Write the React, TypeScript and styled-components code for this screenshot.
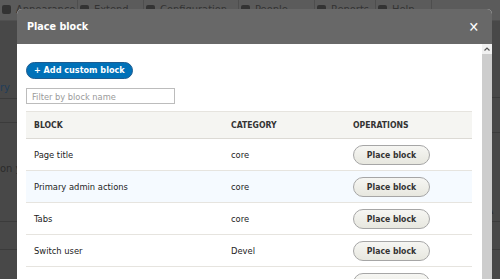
import React from "react";
import styled, { createGlobalStyle } from "styled-components";

const Global = createGlobalStyle`
  html, body { margin: 0; padding: 0; }
  body {
    width: 500px; height: 279px; overflow: hidden;
    background: #484848;
    font-family: "DejaVu Sans Condensed", "DejaVu Sans", sans-serif;
    font-stretch: condensed;
  }
  #root { position: relative; width: 500px; height: 279px; overflow: hidden; }
`;

/* ---------- background page (dimmed) ---------- */
const Page = styled.div`
  display: flex;
  flex-direction: column;
  width: 500px;
  height: 279px;
`;

const Toolbar = styled.div`
  display: flex;
  height: 20px;
  background: #5b5b5b;
  border-bottom: 1px solid #505050;
`;

const ToolItem = styled.div<{ $w: number }>`
  display: flex;
  align-items: flex-start;
  gap: 5px;
  width: ${(p) => p.$w}px;
  padding: 3px 0 0 2px;
  box-sizing: border-box;
  border-right: 1px solid #4e4e4e;
  color: #333;
  font-size: 11px;
  line-height: 14px;
  white-space: nowrap;
  overflow: hidden;
`;

const IconDot = styled.span`
  display: inline-block;
  flex-shrink: 0;
  width: 9px;
  height: 9px;
  margin-top: 2px;
  border-radius: 2px;
  background: #333;
`;

const BgBody = styled.div`
  display: flex;
  justify-content: space-between;
  flex: 1;
`;

const BgCol = styled.div`
  display: flex;
  flex-direction: column;
  width: 20px;
`;

const BgRow = styled.div<{ $h: number; $line?: boolean; $link?: boolean }>`
  height: ${(p) => p.$h}px;
  box-sizing: border-box;
  border-bottom: ${(p) => (p.$line ? "1px solid #3b3b3b" : "none")};
  color: ${(p) => (p.$link ? "#1f3d5a" : "#2b2b2b")};
  font-size: 11px;
  display: flex;
  align-items: flex-end;
  padding-bottom: 4px;
  white-space: nowrap;
  overflow: hidden;
`;

/* ---------- dialog ---------- */
const Dialog = styled.div`
  position: absolute;
  left: 17px;
  top: 9px;
  width: 475px;
  height: 290px;
  display: flex;
  flex-direction: column;
  background: #fff;
  border-radius: 5px 5px 0 0;
  overflow: hidden;
`;

const TitleBar = styled.div`
  flex: 0 0 35px;
  height: 35px;
  box-sizing: border-box;
  background: #686868;
  display: flex;
  align-items: center;
  justify-content: space-between;
  padding: 0 13px 0 10px;
  color: #fff;
`;

const Title = styled.h1`
  margin: 0;
  font-size: 10.7px;
  font-weight: 700;
`;

const Close = styled.span`
  font-size: 14px;
  font-weight: 700;
  line-height: 1;
`;

const ContentWrap = styled.div`
  flex: 1;
  display: flex;
  min-height: 0;
`;

const Content = styled.div`
  flex: 1;
  padding: 18px 10px 0 9px;
  display: flex;
  flex-direction: column;
  align-items: flex-start;
`;

const Scrollbar = styled.div`
  width: 10px;
  flex-shrink: 0;
  display: flex;
  flex-direction: column;
  background: #cdcdcd;
`;

const ScrollArrow = styled.div`
  height: 10px;
  background: #f1f1f1;
  display: flex;
  align-items: center;
  justify-content: center;
`;

const PrimaryButton = styled.button`
  height: 17px;
  padding: 0 7px;
  border: 1px solid #1e5c90;
  border-radius: 20px;
  background: #0071b8;
  color: #fff;
  font-family: inherit;
  font-stretch: condensed;
  font-size: 9px;
  font-weight: 700;
  line-height: 15px;
  cursor: pointer;
`;

const FilterInput = styled.input`
  margin-top: 9px;
  width: 149px;
  height: 19px;
  box-sizing: border-box;
  border: 1px solid #bcbcbc;
  padding: 0 5px;
  font-family: inherit;
  font-stretch: condensed;
  font-size: 9.2px;
  color: #333;
  &::placeholder { color: #9a9a9a; }
`;

const Table = styled.div`
  margin-top: 7px;
  width: 446px;
  display: flex;
  flex-direction: column;
`;

const Row = styled.div<{ $head?: boolean; $hover?: boolean }>`
  display: grid;
  grid-template-columns: 197px 122px 1fr;
  align-items: center;
  height: ${(p) => (p.$head ? 28 : 32)}px;
  box-sizing: border-box;
  background: ${(p) => (p.$head ? "#f5f5f2" : p.$hover ? "#f5faff" : "#fff")};
  border-top: ${(p) => (p.$head ? "1px solid #e6e4df" : "none")};
  border-bottom: 1px solid ${(p) => (p.$head ? "#dcdad5" : "#e6e4df")};
`;

const Cell = styled.div<{ $head?: boolean }>`
  padding-left: 8px;
  font-size: ${(p) => (p.$head ? "8.6px" : "9.3px")};
  font-weight: ${(p) => (p.$head ? 700 : 400)};
  text-transform: ${(p) => (p.$head ? "uppercase" : "none")};
  color: ${(p) => (p.$head ? "#333" : "#222")};
  white-space: nowrap;
`;

const PlaceButton = styled.button`
  width: 77px;
  height: 20px;
  border: 1px solid #a6a6a6;
  border-radius: 20px;
  background: linear-gradient(to bottom, #f6f6f3, #e7e7df);
  color: #333;
  font-family: inherit;
  font-stretch: condensed;
  font-size: 8.6px;
  font-weight: 700;
  padding: 0;
  cursor: pointer;
`;

const rows = [
  { name: "Page title", cat: "core" },
  { name: "Primary admin actions", cat: "core", hover: true },
  { name: "Tabs", cat: "core" },
  { name: "Switch user", cat: "Devel" },
  { name: "Help", cat: "core" },
];

const tools = [
  { label: "Appearance", w: 78 },
  { label: "Extend", w: 66 },
  { label: "Configuration", w: 95 },
  { label: "People", w: 76 },
  { label: "Reports", w: 61 },
  { label: "Help", w: 56 },
];

export default function App() {
  return (
    <>
      <Global />
      <Page>
        <Toolbar>
          {tools.map((t) => (
            <ToolItem key={t.label} $w={t.w}>
              <IconDot />
              {t.label}
            </ToolItem>
          ))}
        </Toolbar>
        <BgBody>
          <BgCol>
            <BgRow $h={78} $line $link>ry</BgRow>
            <BgRow $h={24} $line />
            <BgRow $h={56}>on y</BgRow>
            <BgRow $h={43} $line />
            <BgRow $h={28} $line />
          </BgCol>
          <BgCol>
            <BgRow $h={77} $line />
            <BgRow $h={35} $line />
            <BgRow $h={89} $line>RA</BgRow>
            <BgRow $h={28} $line />
          </BgCol>
        </BgBody>
      </Page>

      <Dialog>
        <TitleBar>
          <Title>Place block</Title>
          <Close>✕</Close>
        </TitleBar>
        <ContentWrap>
          <Content>
            <PrimaryButton>+ Add custom block</PrimaryButton>
            <FilterInput placeholder="Filter by block name" />
            <Table>
              <Row $head>
                <Cell $head>Block</Cell>
                <Cell $head>Category</Cell>
                <Cell $head>Operations</Cell>
              </Row>
              {rows.map((r) => (
                <Row key={r.name} $hover={r.hover}>
                  <Cell>{r.name}</Cell>
                  <Cell>{r.cat}</Cell>
                  <Cell>
                    <PlaceButton>Place block</PlaceButton>
                  </Cell>
                </Row>
              ))}
            </Table>
          </Content>
          <Scrollbar>
            <ScrollArrow>
              <svg width="6" height="4" viewBox="0 0 6 4">
                <path d="M0.5 3.5 L3 1 L5.5 3.5" stroke="#555" strokeWidth="1.2" fill="none" />
              </svg>
            </ScrollArrow>
          </Scrollbar>
        </ContentWrap>
      </Dialog>
    </>
  );
}
